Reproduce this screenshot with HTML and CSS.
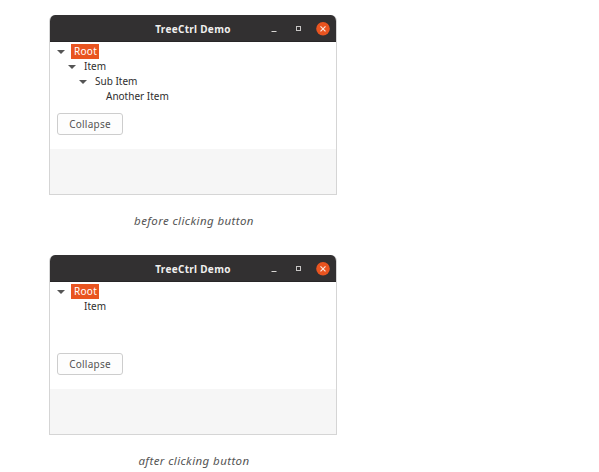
FILE: index.html
```
<!DOCTYPE html>
<html lang="en">
<head>
<meta charset="utf-8">
<title>TreeCtrl Demo</title>
<link rel="stylesheet" href="styles.css">
</head>
<body>
<main class="page">
  <figure class="demo">
    <div class="window">
      <header class="titlebar">
        <h2 class="title">TreeCtrl Demo</h2>
        <svg class="controls" width="64" height="26" viewBox="0 0 64 26">
          <path d="M4.5 15.5h5" stroke="#d8d6d4"/>
          <rect x="29.5" y="10.5" width="4" height="4" fill="none" stroke="#c8c6c5"/>
          <circle cx="56" cy="12.8" r="6.8" fill="#e95420"/>
          <path d="M53.5 10.3l5 5M58.5 10.3l-5 5" stroke="#fbe5dc" stroke-width="1.2"/>
        </svg>
      </header>
      <div class="panel">
        <ul class="tree">
          <li class="row"><i class="arrow"></i><span class="label selected">Root</span></li>
          <li class="row level1"><i class="arrow"></i><span class="label">Item</span></li>
          <li class="row level2"><i class="arrow"></i><span class="label">Sub Item</span></li>
          <li class="row level3"><i class="arrow leaf"></i><span class="label">Another Item</span></li>
        </ul>
        <button class="button">Collapse</button>
      </div>
    </div>
    <figcaption class="caption">before clicking button</figcaption>
  </figure>
  <figure class="demo">
    <div class="window">
      <header class="titlebar">
        <h2 class="title">TreeCtrl Demo</h2>
        <svg class="controls" width="64" height="26" viewBox="0 0 64 26">
          <path d="M4.5 15.5h5" stroke="#d8d6d4"/>
          <rect x="29.5" y="10.5" width="4" height="4" fill="none" stroke="#c8c6c5"/>
          <circle cx="56" cy="12.8" r="6.8" fill="#e95420"/>
          <path d="M53.5 10.3l5 5M58.5 10.3l-5 5" stroke="#fbe5dc" stroke-width="1.2"/>
        </svg>
      </header>
      <div class="panel">
        <ul class="tree">
          <li class="row"><i class="arrow"></i><span class="label selected">Root</span></li>
          <li class="row level1"><i class="arrow leaf"></i><span class="label">Item</span></li>
        </ul>
        <button class="button">Collapse</button>
      </div>
    </div>
    <figcaption class="caption">after clicking button</figcaption>
  </figure>
</main>
</body>
</html>
```
FILE: styles.css
```
* { box-sizing: border-box; }
body {
  margin: 0;
  background: #fff;
  font-family: "Noto Sans", sans-serif;
  overflow: hidden;
}
.page { padding: 15px 0 0 49px; }
.demo { margin: 0; width: 288px; height: 240px; }
.demo:last-child { height: 217px; }
.window {
  height: 180px;
  border: 1px solid #d5d5d5;
  border-top: 0;
  border-radius: 6px 6px 0 0;
  background: #f6f6f6;
  overflow: hidden;
}
.titlebar {
  height: 27px;
  background: #323031;
  border-bottom: 1px solid #282627;
  display: grid;
  grid-template-columns: 1fr auto 1fr;
  align-items: center;
}
.title {
  grid-column: 2;
  margin: 0;
  padding-top: 1px;
  font-size: 10px;
  line-height: 26px;
  font-weight: 700;
  letter-spacing: 0.3px;
  color: #f0efee;
  white-space: nowrap;
}
.controls { justify-self: end; margin-right: 5px; }
.panel {
  height: 107px;
  background: #fff;
  padding: 2px 7px 0;
  display: flex;
  flex-direction: column;
  align-items: flex-start;
}
.tree { list-style: none; margin: 0; padding: 0; height: 69px; }
.row { height: 15px; display: flex; align-items: center; }
.level1 { padding-left: 11px; }
.level2 { padding-left: 22px; }
.level3 { padding-left: 33px; }
.arrow {
  border: 4px solid transparent;
  border-top-color: #555;
  border-bottom: 0;
  margin-right: 6px;
}
.leaf { visibility: hidden; }
.label {
  font-size: 10px;
  line-height: 15px;
  padding: 0 2px;
  color: #2e2e2e;
  white-space: nowrap;
}
.selected {
  background: #e95420;
  color: #fff;
  padding: 0 2px 0 3px;
  letter-spacing: 0.3px;
}
.button {
  width: 66px;
  height: 22px;
  padding: 0;
  border: 1px solid #cdcdcd;
  border-radius: 3px;
  background: #fdfdfd;
  color: #555;
  font: 10px/20px "Noto Sans", sans-serif;
  letter-spacing: 0.25px;
}
.caption {
  margin-top: 17px;
  padding-left: 2px;
  text-align: center;
  font-size: 11.5px;
  line-height: 18px;
  font-style: italic;
  letter-spacing: 0.4px;
  color: #555;
}
```
